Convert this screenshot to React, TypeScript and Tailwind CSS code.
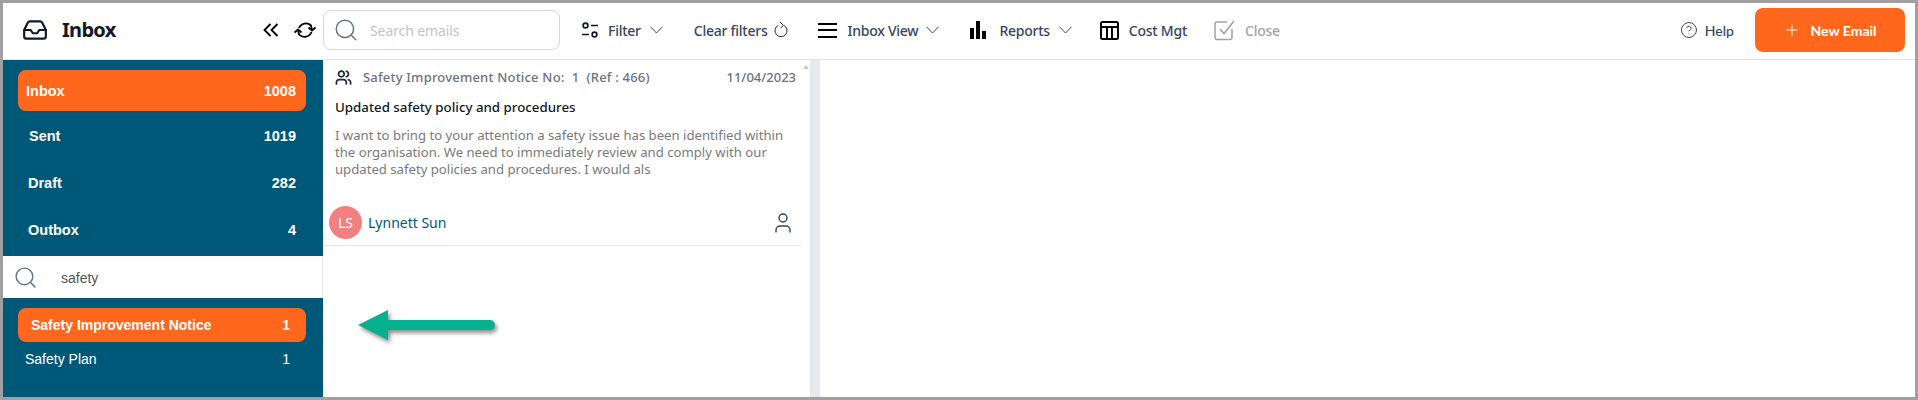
import React from "react";
import { CircleHelp, Inbox as InboxIcon, Plus, Search, User, Users } from "lucide-react";

const ToolLabel = ({ children, className = "" }: { children: React.ReactNode; className?: string }) => (
  <span className={`font-['Noto_Sans',sans-serif] text-[14px] font-medium tracking-[-0.25px] text-[#35465f] ${className}`}>{children}</span>
);

const Chevron = ({ className = "" }: { className?: string }) => (
  <svg width="13" height="8" viewBox="0 0 13 8" fill="none" stroke="#35465f" strokeWidth="1" className={className}>
    <path d="M0.5 0.8 L6.5 7 L12.5 0.8" />
  </svg>
);

const FolderRow = ({ label, count, labelClass }: { label: string; count: number; labelClass: string }) => (
  <div className="flex h-[47px] items-center justify-between pr-[10px] text-[14.5px] font-bold text-white">
    <span className={labelClass}>{label}</span>
    <span>{count}</span>
  </div>
);

const App = () => {
  return (
    <div className="flex h-[400px] w-[1918px] flex-col overflow-hidden border-[3px] border-[#a0a0a0] bg-white font-['Liberation_Sans',sans-serif]">
      {/* Top toolbar */}
      <header className="flex h-[57px] shrink-0 items-center border-b border-[#e4e4e7] pb-[2px]">
        <div className="flex w-[320px] shrink-0 items-center pl-[19px]">
          <InboxIcon size={26} strokeWidth={2} className="text-[#111827]" />
          <span className="ml-[14px] font-['Noto_Sans',sans-serif] text-[20px] font-bold tracking-[-0.7px] text-[#111827]">Inbox</span>
          <svg width="16" height="14" viewBox="0 0 16 14" fill="none" stroke="#000" strokeWidth="1.8" className="ml-[147px]">
            <path d="M7.5 1 L1.5 7 L7.5 13M14.5 1 L8.5 7 L14.5 13" />
          </svg>
          <svg width="22" height="22" viewBox="0 0 22 22" fill="none" stroke="#000" strokeWidth="1.8" className="ml-[15px]">
            <path d="M5 9 A7.5 7.5 0 0 1 17 6.5 L18 11" />
            <path d="M14.5 8.5 L18 11.5 L21.5 8.5" />
            <path d="M17.5 13 A7.5 7.5 0 0 1 5 15.5 L4 11" />
            <path d="M0.5 13.5 L4 10.5 L7.5 13.5" />
          </svg>
        </div>
        <div className="flex h-[40px] w-[237px] shrink-0 items-center rounded-lg border border-[#d5d7e3] pl-[9px]">
          <Search size={26} strokeWidth={1.4} className="text-[#64748b]" />
          <span className="ml-[11px] font-['Noto_Sans',sans-serif] text-[14px] tracking-[-0.1px] text-[#c4c4c4]">Search emails</span>
        </div>
        <div className="ml-[22px] flex items-center">
          <svg width="16" height="16" viewBox="0 0 16 16" fill="none" stroke="#111827" strokeWidth="1.6">
            <circle cx="3.5" cy="3.5" r="2.4" />
            <path d="M9 3.5h7M0 12.5h7" />
            <circle cx="12.5" cy="12.5" r="2.4" />
          </svg>
          <ToolLabel className="ml-[10px]">Filter</ToolLabel>
          <Chevron className="ml-[9px]" />
        </div>
        <div className="ml-[31px] flex items-center">
          <ToolLabel className="tracking-[-0.15px]">Clear filters</ToolLabel>
          <svg width="14" height="18" viewBox="0 0 14 18" fill="none" stroke="#1f2937" strokeWidth="1" className="ml-[6px]">
            <path d="M4 4.5 A6 6 0 1 0 10 4.5" />
            <path d="M6 1 L9.5 4.5 L6.5 7" />
          </svg>
        </div>
        <div className="ml-[30px] flex items-center">
          <div className="flex h-[15px] w-[19px] flex-col justify-between">
            <div className="h-[2px] bg-black" />
            <div className="h-[2px] bg-black" />
            <div className="h-[2px] bg-black" />
          </div>
          <ToolLabel className="ml-[11px]">Inbox View</ToolLabel>
          <Chevron className="ml-[8px]" />
        </div>
        <div className="ml-[31px] flex items-center">
          <svg width="16" height="18" viewBox="0 0 16 18" fill="#000">
            <rect x="0" y="7" width="4" height="11" />
            <rect x="6" y="0" width="4" height="18" />
            <rect x="12" y="10" width="4" height="8" />
          </svg>
          <ToolLabel className="ml-[13px]">Reports</ToolLabel>
          <Chevron className="ml-[9px]" />
        </div>
        <div className="ml-[28px] flex items-center">
          <svg width="19" height="19" viewBox="0 0 19 19" fill="none" stroke="#000" strokeWidth="2">
            <rect x="1" y="1" width="17" height="17" rx="1.5" />
            <path d="M1 6h17M7 6v12M12 6v12" />
          </svg>
          <ToolLabel className="ml-[10px]">Cost Mgt</ToolLabel>
        </div>
        <div className="ml-[27px] flex items-center">
          <svg width="22" height="22" viewBox="0 0 22 22" fill="none" stroke="#a3a3a3" strokeWidth="1.5">
            <path d="M18 10v8.5a2 2 0 0 1-2 2H3a2 2 0 0 1-2-2V5a2 2 0 0 1 2-2h10" />
            <path d="M6 10 L10 14.5 L20 2" />
          </svg>
          <ToolLabel className="ml-[9px] !text-[#a3a3a3]">Close</ToolLabel>
        </div>
        <div className="ml-auto flex items-center">
          <CircleHelp size={18} strokeWidth={1.3} className="text-[#35465f]" />
          <span className="ml-[7px] font-['Lato',sans-serif] text-[14px] font-medium text-[#35465f]">Help</span>
        </div>
        <button className="ml-[21px] mr-[10px] flex h-[44px] w-[150px] items-center justify-center rounded-lg bg-[#ff671d] font-['Lato',sans-serif] text-[14px] font-bold text-white">
          <Plus size={18} strokeWidth={1.3} />
          <span className="ml-[9px]">New Email</span>
        </button>
      </header>

      <div className="relative flex min-h-0 flex-1">
        {/* Folders */}
        <aside className="flex w-[320px] shrink-0 flex-col">
          <div className="h-[196px] bg-[#005878] pl-[15px] pr-[17px] pt-[10px]">
            <div className="flex h-[41px] items-center justify-between rounded-lg bg-[#ff671d] pl-[8px] pr-[10px] pt-[2px] text-[14.5px] font-bold text-white">
              <span>Inbox</span>
              <span>1008</span>
            </div>
            <div className="mt-[2px]">
              <FolderRow label="Sent" count={1019} labelClass="ml-[11px]" />
              <FolderRow label="Draft" count={282} labelClass="ml-[10px]" />
              <FolderRow label="Outbox" count={4} labelClass="ml-[10px]" />
            </div>
          </div>
          <div className="flex h-[42px] items-center border-r border-[#e5e7eb] bg-white pl-[10px]">
            <Search size={25} strokeWidth={1.4} className="text-[#64748b]" />
            <span className="ml-[23px] pt-[2px] text-[14px] text-[#555]">safety</span>
          </div>
          <div className="flex-1 bg-[#005878] pl-[15px] pr-[17px] pt-[10px] text-white">
            <div className="flex h-[34px] items-center justify-between rounded-lg bg-[#ff671d] pl-[13px] pr-[16px] text-[14px] font-bold">
              <span>Safety Improvement Notice</span>
              <span>1</span>
            </div>
            <div className="flex h-[34px] items-center justify-between pl-[7px] pr-[16px] text-[14px]">
              <span>Safety Plan</span>
              <span>1</span>
            </div>
          </div>
        </aside>

        {/* Message list */}
        <section className="relative w-[487px] shrink-0 pl-[9px] pr-[14px] font-['Noto_Sans',sans-serif]">
          <div className="flex items-center pt-[8px] text-[13px] font-medium text-[#6b7280]">
            <Users size={17} strokeWidth={2.4} className="ml-[3px] text-[#1f2937]" />
            <span className="ml-[11px] tracking-[0.2px]">Safety Improvement Notice No:&nbsp; 1&nbsp; (Ref : 466)</span>
            <span className="ml-auto">11/04/2023</span>
          </div>
          <p className="mt-[10px] pl-[3px] text-[13.3px] font-medium text-[#111827]">Updated safety policy and procedures</p>
          <p className="mt-[10px] w-[463px] pl-[3px] text-[13.15px] leading-[17px] text-[#7a7a7a]">
            I want to bring to your attention a safety issue has been identified within the organisation. We need to immediately review and comply with our updated safety policies and procedures. I would als
          </p>
          <div className="-ml-[9px] -mr-[5px] mt-[22px] flex h-[46px] items-center border-b border-[#e5e7eb] pl-[6px] pr-[6px]">
            <div className="flex size-[33px] items-center justify-center rounded-full bg-[#f28080] text-[14px] text-white">LS</div>
            <span className="ml-[6px] text-[14px] text-[#005878]">Lynnett Sun</span>
            <User size={24} strokeWidth={1.4} className="ml-auto text-[#374151]" />
          </div>
          <div className="absolute right-[1px] top-[5px] size-0 border-x-[3px] border-b-[4px] border-x-transparent border-b-[#c8c8c8]" />
        </section>

        {/* Scroll gutter and empty reader */}
        <div className="w-[10px] shrink-0 bg-[#e8e9ed]" />
        <div className="flex-1 bg-white" />

        {/* Callout arrow */}
        <svg width="150" height="44" viewBox="0 0 150 44" className="absolute left-[350px] top-[245px] drop-shadow-[2px_3px_2px_rgba(0,0,0,0.45)]">
          <path d="M5 20 L35 5 V15 H137 a5 5 0 0 1 0 10 H35 V35 Z" fill="#06b08e" />
        </svg>
      </div>
    </div>
  );
};

export default App;
